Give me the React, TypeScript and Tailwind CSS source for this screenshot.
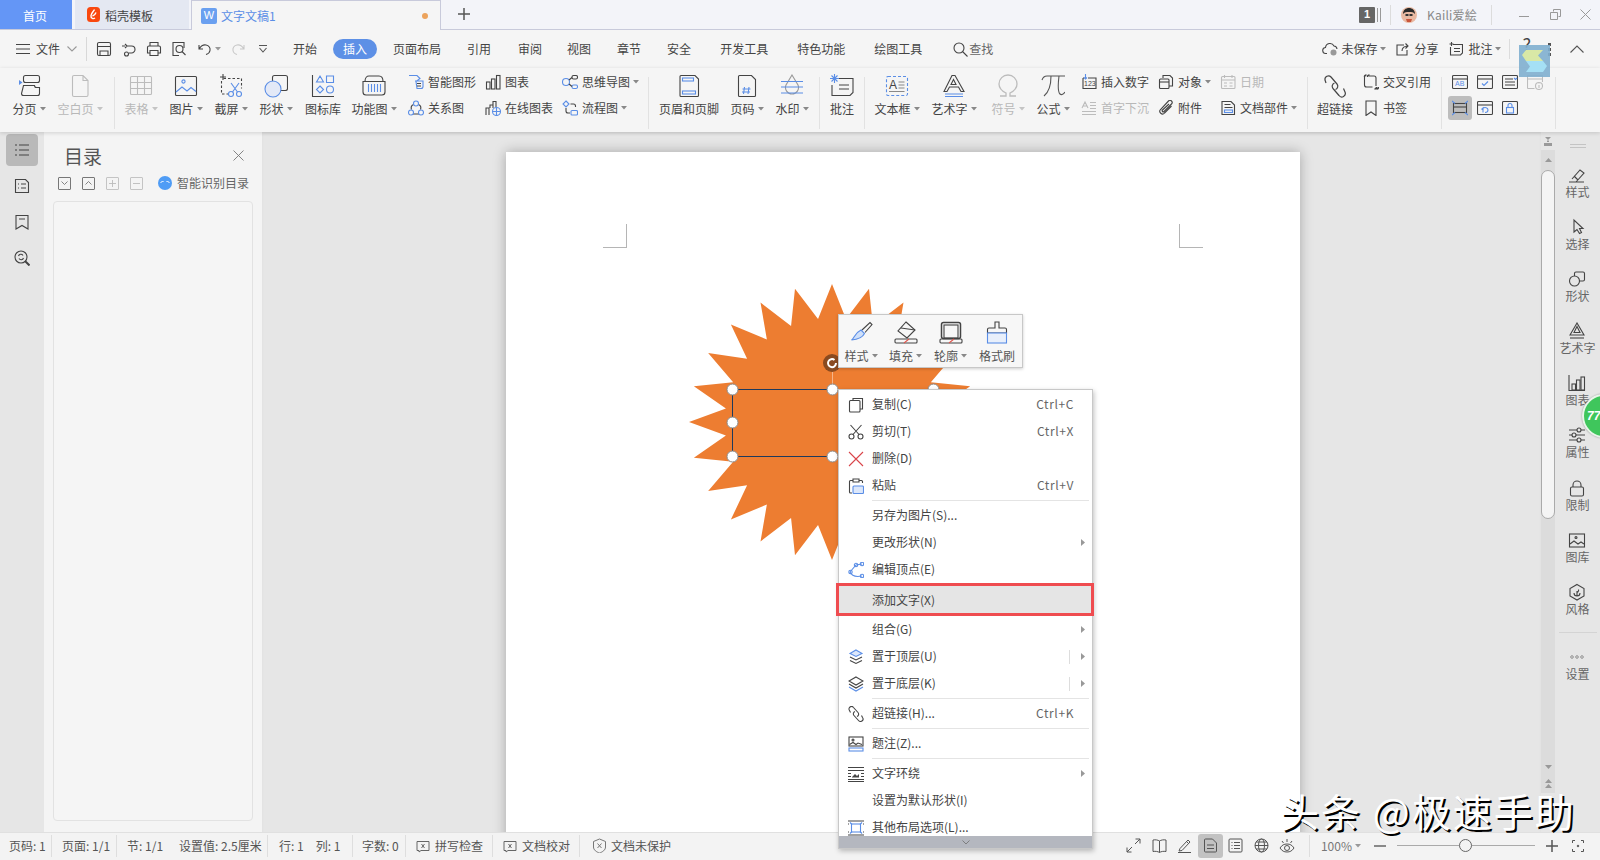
import type { ReactNode } from "react"

const B = "#5b8ee6"
const D = "#444"
const G = "#bcbcbc"

function Ico({ s = 24, h, c = D, sw = 1.1, children }: { s?: number; h?: number; c?: string; sw?: number; children: ReactNode }) {
  return (
    <svg width={s} height={h ?? s} viewBox={`0 0 ${s} ${h ?? s}`} fill="none" stroke={c} strokeWidth={sw} className="block shrink-0">
      {children}
    </svg>
  )
}

function Caret({ c = "#888" }: { c?: string }) {
  return (
    <svg width="6" height="4" viewBox="0 0 6 4" className="ml-[3px] shrink-0">
      <path d="M0 0h6L3 3.5z" fill={c} />
    </svg>
  )
}

function Big({ w, icon, label, caret, off }: { w: string; icon: ReactNode; label: string; caret?: boolean; off?: boolean }) {
  return (
    <div className={`flex flex-col items-center shrink-0 ${w}`}>
      <div className="h-[24px] flex items-center justify-center">{icon}</div>
      <div className={`mt-[2px] h-[18px] flex items-center whitespace-nowrap ${off ? "text-[#b8b8b8]" : ""}`}>
        {label}
        {caret && <Caret c={off ? "#c4c4c4" : "#888"} />}
      </div>
    </div>
  )
}

function Small({ icon, label, caret, off }: { icon: ReactNode; label: string; caret?: boolean; off?: boolean }) {
  return (
    <div className={`h-[18px] flex items-center whitespace-nowrap ${off ? "text-[#b8b8b8]" : ""}`}>
      <div className="w-[20px] shrink-0">{icon}</div>
      {label}
      {caret && <Caret />}
    </div>
  )
}

function Col({ w, children }: { w: string; children: ReactNode }) {
  return <div className={`flex flex-col gap-[8px] -mt-px shrink-0 ${w}`}>{children}</div>
}

const VDiv = () => <div className="w-px self-stretch my-[3px] bg-[#e2e2e2] shrink-0" />

function TopItem({ ml, children }: { ml: string; children: ReactNode }) {
  return <span className={`whitespace-nowrap shrink-0 ${ml}`}>{children}</span>
}

function MenuRow({ icon, label, key2, arrow, bar, hl }: { icon?: ReactNode; label: string; key2?: string; arrow?: boolean; bar?: boolean; hl?: boolean }) {
  return (
    <div className={`h-[27px] flex items-center relative ${hl ? "mt-[3px] mb-[3px] mr-px bg-[#e5e5e5] outline-3 outline-[#ef4c50]" : ""}`}>
      <div className="w-[33px] flex justify-center shrink-0">{icon}</div>
      <span className={`whitespace-nowrap ${hl ? "" : "-mt-[2px]"}`}>{label}</span>
      {key2 && <span className="ml-auto -mt-[2px] pr-[18px] tracking-[0.6px] text-[#666]">{key2}</span>}
      {bar && <div className="ml-auto w-px h-[14px] bg-[#ddd]" />}
      {arrow && (
        <svg width="4" height="7" viewBox="0 0 4 7" className={`${bar ? "ml-[11px]" : "ml-auto"} mr-[7px]`}>
          <path d="M0 0l4 3.5L0 7z" fill="#999" />
        </svg>
      )}
    </div>
  )
}

const MenuSep = () => (
  <div className="h-[3px] flex items-center pl-[33px] pr-[3px]">
    <div className="h-px w-full bg-[#e4e4e4]" />
  </div>
)

function RailItem({ icon, label }: { icon: ReactNode; label: string }) {
  return (
    <div className="h-[52.1px] flex flex-col items-center whitespace-nowrap text-[#666]">
      <div className="h-[20px] flex items-center">{icon}</div>
      <div className="h-[14px] leading-[14px]">{label}</div>
    </div>
  )
}

function StatusSeg({ w, children }: { w: string; children: ReactNode }) {
  return <div className={`flex items-center h-[22px] border-r border-[#dedede] whitespace-nowrap shrink-0 ${w}`}>{children}</div>
}

function starPoints() {
  const pts: string[] = []
  for (let i = 0; i < 48; i++) {
    const a = (i * 7.5 * Math.PI) / 180
    const rx = i % 2 === 0 ? 143 : 107
    const ry = i % 2 === 0 ? 138 : 104
    pts.push(`${146 + rx * Math.sin(a)},${140 - ry * Math.cos(a)}`)
  }
  return pts.join(" ")
}

const handles = [
  [46, 107],
  [146, 107],
  [247, 107],
  [46, 140],
  [46, 174],
  [146, 174],
]

export default function App() {
  return (
    <div className="w-[1600px] h-[860px] relative overflow-hidden flex flex-col bg-[#e6e6e6] text-[12px] text-[#444] font-['Noto_Sans_CJK_SC','Noto_Sans',sans-serif]">
      {/* tabs */}
      <div className="h-[30px] flex bg-[#f3f4f9] border-b border-[#c8cadb] shrink-0">
        <div className="w-[72px] flex items-center justify-center bg-[#6496f6] text-white pt-[2px] pr-[2px]">首页</div>
        <div className="w-[114px] ml-[3px] flex items-center bg-[#e4e8f2] pl-[12px]">
          <svg width="13" height="15" viewBox="0 0 13 15">
            <rect width="13" height="15" rx="3.5" fill="#f9480f" />
            <path d="M7.5 2.5c-1 2-3 3-3.5 6-.3 2.5 2 4 4 2.5M5.5 9c1.5-.5 3-2 3.5-3.5" fill="none" stroke="#fff" strokeWidth="1.4" />
          </svg>
          <span className="ml-[5px] mt-[2px]">稻壳模板</span>
        </div>
        <div className="w-[250px] h-[30px] ml-[2px] flex items-center bg-[#f5f5f5] border border-b-0 border-[#c8cadb] pl-[9px] pr-[12px] text-[#5b8ee6]">
          <div className="w-[16px] h-[16px] flex items-center justify-center rounded-[2px] bg-[#6aa0f0] text-white text-[11px] leading-none font-['Liberation_Sans',sans-serif]">W</div>
          <span className="ml-[4px] mt-[1px]">文字文稿1</span>
          <span className="ml-auto w-[6px] h-[6px] rounded-full bg-[#eca35c]" />
        </div>
        <div className="ml-[17px] mt-[8px]">
          <Ico s={12} c="#555" sw={1.5}><path d="M6 0v12M0 6h12" /></Ico>
        </div>
        <div className="ml-auto flex items-center text-[#888]">
          <div className="w-[16px] h-[16px] flex items-center justify-center bg-[#666] text-white rounded-[1px] font-['Liberation_Sans',sans-serif] font-bold text-[11px]">1</div>
          <div className="ml-[2px] w-[4px] h-[14px] border-x border-[#999]" />
          <div className="ml-[9px] w-px h-[20px] bg-[#dcdcdc]" />
          <svg width="16" height="16" viewBox="0 0 16 16" className="ml-[10px]">
            <circle cx="8" cy="8" r="8" fill="#e9b9a2" />
            <path d="M2 7c0-4 3-6 6-6s6 2 6 6c-2-2-3-2-6-2S4 5 2 7z" fill="#2a2a2a" />
            <rect x="4.5" y="7" width="3" height="2" fill="#333" />
            <rect x="8.5" y="7" width="3" height="2" fill="#333" />
            <path d="M5 12h6l-1 3H6z" fill="#c9563c" />
          </svg>
          <span className="ml-[10px] tracking-[0.2px]">Kaili爱絵</span>
          <div className="ml-[14px] w-px h-[20px] bg-[#dcdcdc]" />
          <div className="ml-[27px] w-[10px] h-px bg-[#999] mt-[4px]" />
          <div className="ml-[21px]">
            <Ico s={11} c="#999" sw={1}><path d="M3.5 2.5V.5h7v7h-2M.5 3.5h7v7h-7z" /></Ico>
          </div>
          <div className="ml-[19px] mr-[9px]">
            <Ico s={11} c="#999" sw={1}><path d="M.5.5l10 10M10.5.5l-10 10" /></Ico>
          </div>
        </div>
      </div>

      {/* menu row */}
      <div className="h-[38px] flex items-center bg-[#f5f5f5] shrink-0 pl-[16px] pr-[16px]">
        <Ico s={14} h={12} sw={1}><path d="M0 1.5h14M0 6h14M0 10.5h14" /></Ico>
        <TopItem ml="ml-[6px]">文件</TopItem>
        <div className="ml-[7px]"><Ico s={10} h={6} c="#999"><path d="M.5.5L5 5 9.5.5" /></Ico></div>
        <div className="ml-[9px] w-px h-[24px] bg-[#d8d8d8]" />
        <div className="ml-[9px]">
          <Ico s={16} sw={1.1}><path d="M1.5 3a1.5 1.5 0 0 1 1.5-1.5h10a1.5 1.5 0 0 1 1.5 1.5v10a1.5 1.5 0 0 1-1.5 1.5H3A1.5 1.5 0 0 1 1.5 13zM4 14.5V10h8v4.5M1.5 5.5h13" /></Ico>
        </div>
        <div className="ml-[9px]">
          <Ico s={16}><path d="M6 5h4.5a3.5 3.5 0 0 1 0 7H8M6 5L4 3M6 5L4 7M1 5h3" /><circle cx="5.5" cy="13" r="2" /></Ico>
        </div>
        <div className="ml-[9px]">
          <Ico s={16}><path d="M4 5V1.500h8V5M4 12H1.500V6.500a1.500 1.500 0 0 1 1.500-1.500h10a1.500 1.500 0 0 1 1.500 1.500V12H12M4 9.500h8v5H4z" /></Ico>
        </div>
        <div className="ml-[9px]">
          <Ico s={16}><path d="M13 7V1.500H2v13h6" /><circle cx="8.500" cy="8" r="3.500" /><path d="M11 10.500l3.500 3.500" /></Ico>
        </div>
        <div className="ml-[11px] flex items-center">
          <Ico s={14}><path d="M1 3v4h4M1.500 6.500C3 4 5 2.500 8 3c3 .5 4.500 3 4 5.500-.3 2-2 3.500-4 4" /></Ico>
          <Caret c="#999" />
        </div>
        <div className="ml-[10px]">
          <Ico s={14} c="#c8c8c8"><path d="M13 3v4H9M12.500 6.500C11 4 9 2.500 6 3c-3 .5-4.500 3-4 5.500.3 2 2 3.500 4 4" /></Ico>
        </div>
        <div className="ml-[13px]">
          <Ico s={10} h={8} c="#555"><path d="M1 .5h8M1.500 3L5 7l3.500-4" /></Ico>
        </div>
        <TopItem ml="ml-[25px]">开始</TopItem>
        <span className="ml-[16px] w-[44px] h-[20px] flex items-center justify-center rounded-full bg-[#5d90e6] text-white shrink-0">插入</span>
        <TopItem ml="ml-[16px]">页面布局</TopItem>
        <TopItem ml="ml-[26px]">引用</TopItem>
        <TopItem ml="ml-[27px]">审阅</TopItem>
        <TopItem ml="ml-[25px]">视图</TopItem>
        <TopItem ml="ml-[26px]">章节</TopItem>
        <TopItem ml="ml-[26px]">安全</TopItem>
        <TopItem ml="ml-[29px]">开发工具</TopItem>
        <TopItem ml="ml-[29px]">特色功能</TopItem>
        <TopItem ml="ml-[29px]">绘图工具</TopItem>
        <div className="ml-[31px]">
          <Ico s={15}><circle cx="6" cy="6" r="5" /><path d="M9.500 9.500l5 5" /></Ico>
        </div>
        <TopItem ml="ml-[1px] text-[#666]">查找</TopItem>
        <div className="ml-auto flex items-center">
          <Ico s={17} h={14}>
            <path d="M5 11.500H4a3 3 0 0 1-.5-6 4.500 4.500 0 0 1 8.500-1.500 3.500 3.500 0 0 1 3 3" />
            <circle cx="11.500" cy="10.500" r="3" fill="#999" stroke="none" />
          </Ico>
          <span className="ml-[2px]">未保存</span>
          <Caret />
          <div className="ml-[10px]">
            <Ico s={13}><path d="M8 2H1v10h10V7M6 8c0-3 2-5 6-5M9.500.5L12 3 9.500 5.500" /></Ico>
          </div>
          <span className="ml-[5px]">分享</span>
          <div className="ml-[11px]">
            <Ico s={14}><path d="M4 2.500h9.500v8.500l-2 2H1.500V5M5 6.500h6M5 9.500h6M2.500 0v4M.5 2h4" /></Ico>
          </div>
          <span className="ml-[5px]">批注</span>
          <Caret />
          <div className="ml-[8px] w-px h-[20px] bg-[#dcdcdc]" />
          <span className="ml-[12px] -mt-[10px] text-[18px] leading-none">?</span>
          <span className="ml-[17px] w-[3px] h-[13px] flex flex-col justify-between">
            <i className="block w-[3px] h-[3px] bg-[#555]" />
            <i className="block w-[3px] h-[3px] bg-[#555]" />
            <i className="block w-[3px] h-[3px] bg-[#555]" />
          </span>
          <div className="ml-[19px]">
            <Ico s={14} h={8} c="#555"><path d="M.5 7.500L7 1l6.500 6.500" /></Ico>
          </div>
        </div>
      </div>

      {/* ribbon */}
      <div className="h-[64px] flex items-start pt-[6px] pl-[6px] bg-[#f5f5f5] shrink-0 relative z-10 shadow-[0_1px_4px_rgba(0,0,0,0.15)]">
        <Big w="w-[46px]" caret label="分页" icon={
          <Ico><rect x="6.500" y="1.500" width="16" height="7" rx="2" /><path d="M6.500 11.500h11a2 2 0 0 0 2 2h3v6a2 2 0 0 1-2 2h-14a2 2 0 0 1-2-2z" /><path d="M2 6l3.500 2.500L2 11z" fill={B} stroke="none" /></Ico>
        } />
        <Big w="w-[56px]" caret off label="空白页" icon={
          <Ico c={G}><path d="M4.500 3a1.500 1.500 0 0 1 1.500-1.500h9l5 5V21a1.500 1.500 0 0 1-1.500 1.500H6A1.500 1.500 0 0 1 4.500 21zM15 1.500v5h5" /></Ico>
        } />
        <div className="w-[6px] shrink-0" />
        <VDiv />
        <Big w="w-[52px]" caret off label="表格" icon={
          <Ico c={G}><rect x="1.500" y="2.500" width="21" height="18" rx="1" /><path d="M1.500 8.500h21M1.500 14.500h21M8.500 2.500v18M15.500 2.500v18" /></Ico>
        } />
        <Big w="w-[38px]" caret label="图片" icon={
          <Ico><rect x="1.500" y="2.500" width="21" height="19" rx="1" /><circle cx="9.500" cy="7.500" r="1.600" stroke={B} /><path d="M2 18l6-5 5 4 4-3.500 5 4" stroke={B} /></Ico>
        } />
        <Big w="w-[52px]" caret label="截屏" icon={
          <Ico><path d="M4.500 4.500h18v10M2.500 7v13h9" strokeDasharray="2.500 2" /><path d="M4 0v6M1 3h6" /><circle cx="12" cy="20" r="2.500" stroke={B} /><circle cx="20" cy="20" r="2.500" stroke={B} /><path d="M13.500 18L20 9M18.500 18L12 9" stroke={B} /></Ico>
        } />
        <Big w="w-[38px]" caret label="形状" icon={
          <Ico><rect x="8.500" y="1.500" width="15" height="15" rx="2" /><circle cx="9" cy="15" r="8" fill="#e3e9f7" stroke={B} /></Ico>
        } />
        <Big w="w-[56px]" label="图标库" icon={
          <Ico><path d="M1.500 1v21.500H23" /><path d="M9 2l3.500 6h-7zM15.500 2h7v6.500h-7zM9 12l3.500 3.500L9 19l-3.500-3.500z" stroke={B} /><circle cx="19" cy="15.500" r="3.500" stroke={B} /></Ico>
        } />
        <Big w="w-[46px]" caret label="功能图" icon={
          <Ico><path d="M3 7.500c0-4 2-5.500 4-5.500h10c2 0 4 1.500 4 5.500M1 7.500h22V18a3 3 0 0 1-3 3H4a3 3 0 0 1-3-3z" /><path d="M6.500 10v8M9.500 10v8M12.500 10v8M15.500 10v8M18.500 10v8" stroke={B} /></Ico>
        } />
        <div className="w-[11px] shrink-0" />
        <Col w="w-[77px]">
          <Small label="智能图形" icon={<Ico s={16}><path d="M1 1.500h8l3 3-4 3 1 7h4a2 2 0 0 0 2-2V7H7" stroke={B} /><path d="M9 9.500h4M9 12h4" /></Ico>} />
          <Small label="关系图" icon={<Ico s={16}><path d="M5.500 4.500a4 4 0 0 0-2 5M10.500 4.500a4 4 0 0 1 2 5M5 14h6" /><circle cx="8" cy="3.500" r="2.500" stroke={B} /><circle cx="3" cy="12.500" r="2.500" stroke={B} /><circle cx="13" cy="12.500" r="2.500" stroke={B} /></Ico>} />
        </Col>
        <Col w="w-[77px]">
          <Small label="图表" icon={<Ico s={16}><rect x="1.500" y="8" width="3.500" height="7" /><rect x="6.500" y="5" width="3.500" height="10" /><rect x="11.500" y="1.500" width="3.500" height="13.500" /></Ico>} />
          <Small label="在线图表" icon={<Ico s={16}><path d="M1 15V8h3v7M5 8V5h3v3M8 5V1.500h3V7" /><circle cx="11.500" cy="11.500" r="4" stroke={B} /><path d="M7.500 11.500h8M11.500 7.500v8" stroke={B} /></Ico>} />
        </Col>
        <Col w="w-[86px]">
          <Small caret label="思维导图" icon={<Ico s={16}><circle cx="4" cy="8" r="3.500" stroke={B} /><rect x="10" y="1.500" width="5.500" height="3.500" rx="1.500" /><rect x="10" y="11" width="5.500" height="3.500" rx="1.500" stroke={B} /><path d="M7 6l3-2.500M7 10l3 2.500" /></Ico>} />
          <Small caret label="流程图" icon={<Ico s={16}><path d="M4 1l3 3-3 3-3-3z" stroke={B} /><path d="M8.500 4h3a2 2 0 0 1 2 2v1M4 8v3a2 2 0 0 0 2 2h2" /><rect x="9" y="10.500" width="6.500" height="4.500" rx="1" stroke={B} /></Ico>} />
        </Col>
        <VDiv />
        <Big w="w-[80px]" label="页眉和页脚" icon={
          <Ico><path d="M3 2.500a1 1 0 0 1 1-1h14l3.500 3.500v16.500a1 1 0 0 1-1 1H4a1 1 0 0 1-1-1z" /><rect x="5.500" y="4" width="11" height="3" stroke={B} /><rect x="5.500" y="17" width="13" height="3" stroke={B} /></Ico>
        } />
        <Big w="w-[36px]" caret label="页码" icon={
          <Ico><path d="M3.500 2.500a1 1 0 0 1 1-1h12l4 4v16a1 1 0 0 1-1 1h-15a1 1 0 0 1-1-1z" /><path d="M9.500 13l-1 7M14 13l-1 7M7.500 15h8M7 18h8" stroke={B} /></Ico>
        } />
        <Big w="w-[54px]" caret label="水印" icon={
          <Ico c="#999"><path d="M12 1l6 10a6.500 6.500 0 1 1-12 0z" /><path d="M1 7.500h22M1 13h22M1 19h22" stroke={B} /></Ico>
        } />
        <VDiv />
        <Big w="w-[44px]" label="批注" icon={
          <Ico><path d="M9 4.500h14v14l-3 3H2V11M9 11h10M9 15h10" /><path d="M4.500 0v9M0 4.500h9M1.500 1.500l6 6M7.500 1.500l-6 6" stroke={B} /></Ico>
        } />
        <VDiv />
        <Big w="w-[64px]" caret label="文本框" icon={
          <Ico>
            <rect x="1.500" y="2.500" width="21" height="19" rx="1.500" stroke={B} strokeDasharray="3 2" />
            <text x="4" y="15" fontSize="12" fill={D} stroke="none" fontFamily="Liberation Sans">A</text>
            <path d="M13.500 8h6M13.500 11h6M13.500 14h6M4 17.500h15.500" stroke="#888" />
          </Ico>
        } />
        <Big w="w-[50px]" caret label="艺术字" icon={
          <Ico><path d="M2 17.500L10 1.500h3l9 16h-3l-2.500-4.500h-9L5 17.500z" /><path d="M9 10.500l2.500-5 2.500 5z" /><path d="M3 20h18M3 22.500h18" stroke={B} /></Ico>
        } />
        <Big w="w-[58px]" caret off label="符号" icon={
          <Ico c={G} sw={1.3}><path d="M4 22h6v-3C6 17 3 14 3 10a9 9 0 0 1 18 0c0 4-3 7-7 9v3h6" /></Ico>
        } />
        <Big w="w-[32px]" caret label="公式" icon={
          <Ico c="#555"><path d="M1 6c1-3 3-4 5-4h18M10 2c0 9-2 16-7 20M18 2c-1 8-1 16 1 18 1 1 3 1 5-2" /></Ico>
        } />
        <div className="w-[12px] shrink-0" />
        <Col w="w-[77px]">
          <Small label="插入数字" icon={
            <Ico s={16}>
              <path d="M2 4v10.500h13V4H7M2 4h1" />
              <path d="M4.500 0v5M3 3.500l1.500 1.500L6 3.500" stroke={B} />
              <text x="3" y="12" fontSize="7" fill={D} stroke="none" fontFamily="Liberation Sans">123</text>
            </Ico>
          } />
          <Small off label="首字下沉" icon={<Ico s={16} c={G}><path d="M1 8l3-6 3 6M2 6h4M9 2.500h6M9 5.500h6M9 8.500h6M1 11.500h14M1 14.500h14" /></Ico>} />
        </Col>
        <Col w="w-[62px]">
          <Small caret label="对象" icon={<Ico s={16}><path d="M5 4V1.500h7l2.500 2.500v8H11" /><rect x="1.500" y="5" width="9.500" height="9.500" rx="1" /><path d="M1.500 8h9.500" /></Ico>} />
          <Small label="附件" icon={<Ico s={16}><path d="M13.500 6l-7 7a2.500 2.500 0 0 1-4-3.500l8-8.500a2 2 0 0 1 3 3l-7.500 7.500a1 1 0 0 1-1.500-1.500L11 4" /></Ico>} />
        </Col>
        <Col w="w-[87px]">
          <Small off label="日期" icon={<Ico s={16} c={G}><rect x="1.500" y="2.500" width="13.500" height="12" rx="1" /><path d="M1.500 6h13.500M4.500 1v3M12 1v3M4 9h3M9.500 9h3M4 12h3M9.500 12h3" /></Ico>} />
          <Small caret label="文档部件" icon={<Ico s={16}><path d="M2 1.500h9l3.500 3.500v9.500H2z" /><path d="M4.500 4.500h6M4.500 7.500h8" /><rect x="4.500" y="10" width="8" height="2.500" stroke={B} /></Ico>} />
        </Col>
        <VDiv />
        <Big w="w-[54px]" label="超链接" icon={
          <Ico sw={1.2}><path d="M3 9l-1-3a3.500 3.500 0 0 1 6-3l6 7a3.500 3.500 0 0 1-1.500 5.500" /><path d="M20.500 14.500l1.500 3.500a3.500 3.500 0 0 1-6 3.500l-6-7a3.500 3.500 0 0 1 1.500-5.500" /></Ico>
        } />
        <div className="w-px shrink-0" />
        <Col w="w-[78px]">
          <Small label="交叉引用" icon={
            <Ico s={16}><path d="M1.500 3v8a2 2 0 0 0 2 2h6M13 12V4a2 2 0 0 0-2-2H6" /><path d="M1.500 3c0-1.500 1-2 2-2M4.500 3c0-1.500 1-2 2-2M13.500 13c0 1.500-1 2-2 2M15.500 13c0 1.500-1 2-2 2" strokeWidth="1.500" /></Ico>
          } />
          <Small label="书签" icon={<div className="ml-[2px]"><Ico s={12} h={16}><path d="M1 1h10v14.500l-5-3.500-5 3.500z" /></Ico></div>} />
        </Col>
        <VDiv />
        <div className="w-[10px] shrink-0" />
        <div className="flex flex-col gap-[8px] -mt-px w-[100px] shrink-0">
          <div className="h-[18px] flex items-center">
            <div className="w-[25px]">
              <Ico s={16}><rect x=".5" y="1.500" width="15" height="13" rx="1" /><path d="M.5 5h15" /><text x="3" y="12" fontSize="7" fill={B} stroke="none" fontFamily="Liberation Sans">AB</text></Ico>
            </div>
            <div className="w-[25px]">
              <Ico s={16}><rect x=".5" y="1.500" width="15" height="13" rx="1" /><path d="M.5 5h15" /><path d="M5 9.500l2 2 4-4" stroke={B} /></Ico>
            </div>
            <div className="w-[25px]">
              <Ico s={16}><rect x=".5" y="1.500" width="15" height="13" rx="1" /><path d="M3 5h8M3 8h10M3 11h10" /><path d="M12 4l1.500 1.500L15 4" stroke={B} /></Ico>
            </div>
            <div className="w-[25px]">
              <Ico s={16} c={G}><path d="M.5 14.500v-13h15V8M.5 5h15M.5 14.500h7" /><circle cx="12" cy="12" r="3.500" /><path d="M12 11v3M12 9.500v.5" /></Ico>
            </div>
          </div>
          <div className="h-[18px] flex items-center">
            <div className="w-[25px]">
              <div className="-ml-[4px] w-[24px] h-[24px] flex items-center justify-center rounded-[3px] bg-[#bdbdbd]">
                <Ico s={16}><rect x="1.500" y="3.500" width="13" height="9" /><path d="M1.500 7h13" /><path d="M0 1l3 2.500M16 1l-3 2.500M0 15l3-2.500M16 15l-3-2.500" stroke={B} /></Ico>
              </div>
            </div>
            <div className="w-[25px]">
              <Ico s={16}><rect x=".5" y="1.500" width="15" height="13" rx="1" /><path d="M.5 5h15" /><path d="M6 12.500V8l-1.500 1.500M6 8c2-1 5-.5 5 2s-2 2.500-3 2.500" stroke={B} /></Ico>
            </div>
            <div className="w-[25px]">
              <Ico s={16}><rect x=".5" y="1.500" width="15" height="13" rx="1" /><rect x="4.500" y="7.500" width="7" height="5.500" stroke={B} /><path d="M6 7.500V5.500a2 2 0 0 1 4 0v2" stroke={B} /></Ico>
            </div>
          </div>
        </div>
        <div className="w-[3px] shrink-0" />
        <VDiv />
      </div>

      {/* main */}
      <div className="flex-1 flex min-h-0">
        <div className="w-[44px] shrink-0 flex flex-col items-center pt-[2px] gap-[4px]">
          <div className="w-[32px] h-[32px] flex items-center justify-center rounded-[4px] bg-[#b9b9b9]">
            <Ico s={16}><path d="M5 3h10M5 8h10M5 13h10M1 3h2M1 8h2M1 13h2" /></Ico>
          </div>
          <div className="w-[32px] h-[32px] flex items-center justify-center">
            <Ico s={16}><path d="M1.500 1.500h10l3 3v10h-13z" /><path d="M4 6h1M7 6h5M4 10h1M7 10h5" /></Ico>
          </div>
          <div className="w-[32px] h-[32px] flex items-center justify-center">
            <Ico s={16}><path d="M2 1.500h12V15l-6-3.500L2 15zM5 5h6" /></Ico>
          </div>
          <div className="w-[32px] h-[32px] flex items-center justify-center">
            <Ico s={16}><circle cx="7" cy="7" r="6" /><path d="M11 11l4.500 4.500" strokeWidth="2" /><path d="M4.500 6a2.500 2.500 0 0 1 4.500-.5M9.500 8a2.500 2.500 0 0 1-4.500.5" /></Ico>
          </div>
        </div>

        <div className="w-[218px] shrink-0 bg-[#f4f4f4] flex flex-col">
          <div className="h-[24px] mt-[11px] flex items-center justify-between pl-[20px] pr-[18px]">
            <span className="text-[19px] text-[#555] leading-none">目录</span>
            <Ico s={11} c="#777" sw={.9}><path d="M.5.5l10 10M10.500.5l-10 10" /></Ico>
          </div>
          <div className="mt-[9px] h-[14px] flex items-center pl-[14px]">
            <div className="w-[13px] h-[13px] flex items-center justify-center border border-[#777] rounded-[1px]">
              <Ico s={7} h={4} c="#777" sw={.9}><path d="M.5.5L3.500 3.500 6.500.5" /></Ico>
            </div>
            <div className="ml-[11px] w-[13px] h-[13px] flex items-center justify-center border border-[#777] rounded-[1px]">
              <Ico s={7} h={4} c="#777" sw={.9}><path d="M.5 3.500L3.500.5 6.500 3.500" /></Ico>
            </div>
            <div className="ml-[11px] w-[13px] h-[13px] flex items-center justify-center border border-[#c4c4c4] rounded-[1px]">
              <Ico s={7} c="#bbb" sw={.9}><path d="M3.500 0v7M0 3.500h7" /></Ico>
            </div>
            <div className="ml-[11px] w-[13px] h-[13px] flex items-center justify-center border border-[#c4c4c4] rounded-[1px]">
              <Ico s={7} c="#bbb" sw={.9}><path d="M0 3.500h7" /></Ico>
            </div>
            <svg width="14" height="14" viewBox="0 0 14 14" className="ml-[15px]">
              <circle cx="7" cy="7" r="7" fill="#4f9cf5" />
              <path d="M2.500 7l2-2 1 1M8.500 6l1-1 2 2" fill="none" stroke="#fff" strokeWidth="1" />
            </svg>
            <span className="ml-[5px] whitespace-nowrap text-[#666]">智能识别目录</span>
          </div>
          <div className="mx-[9px] mt-[11px] h-[620px] bg-[#f5f5f5] border border-[#e2e2e2] rounded-[4px]" />
        </div>

        <div className="flex-1 min-w-0 pl-[244px] pt-[20px] overflow-hidden shadow-[inset_0_2px_3px_rgba(0,0,0,0.04)]">
          <div className="w-[794px] h-[900px] bg-white relative shadow-[0_0_12px_rgba(0,0,0,0.28)]">
            <div className="absolute left-[97px] top-[72px] w-[24px] h-[24px] border-r border-b border-[#b5b5b5]" />
            <div className="absolute left-[673px] top-[72px] w-[24px] h-[24px] border-l border-b border-[#b5b5b5]" />
            <svg width="310" height="285" viewBox="0 0 310 285" className="absolute left-[180px] top-[130px]">
              <polygon points={starPoints()} fill="#ed7d31" />
              <path d="M146.500 107V90" stroke="#f5b58a" strokeWidth="1" />
              <rect x="46.500" y="107.500" width="201" height="67" fill="none" stroke="#1f3a5c" strokeWidth="1" />
              <circle cx="146" cy="81" r="9" fill="#8a4a20" />
              <path d="M150 81a4 4 0 1 1-1.500-3" fill="none" stroke="#fff" strokeWidth="2" />
              {handles.map(([x, y]) => (
                <circle key={`${x}-${y}`} cx={x + 0.5} cy={y + 0.5} r="5.500" fill="#fff" stroke="#8a8a8a" strokeWidth="1" />
              ))}
            </svg>
          </div>
        </div>

        {/* scrollbar */}
        <div className="w-[14px] shrink-0 flex flex-col">
          <div className="h-[18px] flex items-center justify-center">
            <svg width="8" height="9" viewBox="0 0 8 9"><path d="M1 0h6L4 3zM3 3.500h2V5H3zM0 6h8v3H0z" fill="#999" /></svg>
          </div>
          <div className="h-[643px] bg-[#dcdcdc] flex flex-col">
            <div className="h-[20px] flex items-center justify-center">
              <svg width="7" height="4" viewBox="0 0 7 4"><path d="M3.500 0L7 4H0z" fill="#999" /></svg>
            </div>
            <div className="h-[349px] bg-[#f4f4f4] border border-[#aaa] rounded-full" />
            <div className="mt-auto mb-[5px] flex flex-col items-center gap-[10px]">
              <svg width="7" height="4" viewBox="0 0 7 4"><path d="M0 0h7L3.500 4z" fill="#999" /></svg>
              <svg width="7" height="9" viewBox="0 0 7 9"><path d="M3.500 0L7 4H0zM3.500 5L7 9H0z" fill="#999" /></svg>
            </div>
          </div>
        </div>

        {/* right rail */}
        <div className="w-[45px] shrink-0 flex flex-col items-center pt-[12px]">
          <div className="w-[16px] h-[4px] border-y border-[#c4c4c4] mb-[17px]" />
          <RailItem label="样式" icon={<Ico s={18}><path d="M1 16h15M4 13l8-9 4 3-8 9M6 10l4 4" /></Ico>} />
          <RailItem label="选择" icon={<Ico s={18}><path d="M6 2v12l3-2.500 2.500 4 2-1-2-4h3.500z" /></Ico>} />
          <RailItem label="形状" icon={<Ico s={18}><rect x="6.500" y="2" width="10" height="9" rx="1.500" /><circle cx="6.500" cy="11" r="5" fill="#e6e6e6" /></Ico>} />
          <RailItem label="艺术字" icon={<Ico s={18}><path d="M2 13L9 1l7 12zM6 10.500l3-6 3 6z" /><path d="M2 16h14" /></Ico>} />
          <RailItem label="图表" icon={<Ico s={18}><path d="M1 1v15.500h16" /><rect x="4" y="10" width="3.500" height="6" /><rect x="8.500" y="6" width="3.500" height="10" /><rect x="13" y="3" width="3.500" height="13" /></Ico>} />
          <RailItem label="属性" icon={<Ico s={18}><path d="M1 4h16M1 9h16M1 14h16" /><circle cx="11" cy="4" r="2" fill="#e6e6e6" /><circle cx="6" cy="9" r="2" fill="#e6e6e6" /><circle cx="11" cy="14" r="2" fill="#e6e6e6" /></Ico>} />
          <RailItem label="限制" icon={<Ico s={18}><rect x="2.500" y="8" width="13" height="9" rx="1.500" /><path d="M5 8V6a4 4 0 0 1 8 0v2" /></Ico>} />
          <RailItem label="图库" icon={<Ico s={18}><rect x="1.500" y="3" width="15" height="13" /><circle cx="8" cy="6.500" r="1" /><path d="M2 13l4-3 4 3 3-2 3 2" /></Ico>} />
          <RailItem label="风格" icon={<Ico s={18}><path d="M9 1.500l7 4v7.500l-7 4-7-4V5.500z" /><path d="M9 13V8M9 13c-2 0-3-1.500-3-3M9 13c2 0 3-1.500 3-3M9 9.500c1-.5 2-2 1.500-3" /></Ico>} />
          <div className="w-[38px] h-px bg-[#d4d4d4] -mt-[2px] mb-[14px]" />
          <RailItem label="设置" icon={<Ico s={18} c="#888" sw={.9}><circle cx="4" cy="9" r="1.300" /><circle cx="9" cy="9" r="1.300" /><circle cx="14" cy="9" r="1.300" /></Ico>} />
        </div>
      </div>

      {/* status bar */}
      <div className="h-[28px] shrink-0 flex items-center justify-between bg-[#f3f3f3] border-t border-[#e0e0e0] text-[#555] relative pb-[2px]">
        <div className="flex items-center">
          <StatusSeg w="w-[52px] pl-[9px]">页码: 1</StatusSeg>
          <StatusSeg w="w-[65px] pl-[10px]">页面: 1/1</StatusSeg>
          <StatusSeg w="w-[151px] pl-[10px]">
            <span>节: 1/1</span>
            <span className="ml-[16px]">设置值: 2.5厘米</span>
          </StatusSeg>
          <StatusSeg w="w-[85px] pl-[11px]">
            <span>行: 1</span>
            <span className="ml-[12px]">列: 1</span>
          </StatusSeg>
          <StatusSeg w="w-[53px] pl-[9px]">字数: 0</StatusSeg>
          <StatusSeg w="w-[87px] pl-[10px]">
            <Ico s={14} c="#666" sw={1}><path d="M1 2.500h12v9H5l-2 1.500v-1.500H1zM5.500 5l3 4M8.500 5l-3 4" /></Ico>
            <span className="ml-[5px]">拼写检查</span>
          </StatusSeg>
          <StatusSeg w="w-[87px] pl-[10px]">
            <Ico s={14} c="#666" sw={1}><path d="M1 2.500h12v9H5l-2 1.500v-1.500H1zM5.500 5l3 4M8.500 5l-3 4" /></Ico>
            <span className="ml-[5px]">文档校对</span>
          </StatusSeg>
          <div className="pl-[12px] flex items-center whitespace-nowrap">
            <Ico s={15} c="#777" sw={1}><path d="M7.500 1l6 2.500V9c0 3-3 5-6 6-3-1-6-3-6-6V3.500zM5.500 5.500l4 4.500M9.500 5.500l-4 4.500" /></Ico>
            <span className="ml-[4px]">文档未保护</span>
          </div>
        </div>
        <div className="flex items-center pr-[16px]">
          <div className="w-[25.600px] flex justify-center">
            <Ico s={15} c="#555" sw={1}><path d="M9.500 1H14v4.500M5.500 14H1V9.500M14 1L9 6M1 14l5-5" /></Ico>
          </div>
          <div className="w-[25.600px] flex justify-center">
            <Ico s={15} c="#555" sw={1}><path d="M7.500 3c-1.500-1-4-1.500-6.500-1v11.500c2.500-.5 5 0 6.500 1 1.500-1 4-1.500 6.500-1V2c-2.500-.5-5 0-6.500 1zM7.500 3v11.500" /></Ico>
          </div>
          <div className="w-[25.600px] flex justify-center">
            <Ico s={15} c="#555" sw={1}><path d="M1 14.500h13M3 10.500l8-8.500 2 2-8 8.500-3 .5zM9.500 3.500l2 2" /></Ico>
          </div>
          <div className="w-[25.600px] h-[24px] flex items-center justify-center rounded-[3px] bg-[#c2c2c2]">
            <Ico s={15} c="#555" sw={1}><path d="M1.500 2a1 1 0 0 1 1-1h7l4 4v8a1 1 0 0 1-1 1h-10a1 1 0 0 1-1-1zM4 7h7M4 10.500h7" /></Ico>
          </div>
          <div className="w-[25.600px] flex justify-center">
            <Ico s={15} c="#555" sw={1}><rect x="1" y="1" width="13" height="13" rx="1" /><path d="M3.500 4.500h1M6 4.500h6M3.500 7.500h1M6 7.500h6M3.500 10.500h1M6 10.500h6" /></Ico>
          </div>
          <div className="w-[25.600px] flex justify-center">
            <Ico s={15} c="#555" sw={1}><circle cx="7.500" cy="7.500" r="6.500" /><ellipse cx="7.500" cy="7.500" rx="3" ry="6.500" /><path d="M1 7.500h13M2 4h11M2 11h11" /></Ico>
          </div>
          <div className="w-[25.600px] flex justify-center">
            <Ico s={16} c="#555" sw={1}><path d="M1 10c2-3 4-4 7-4s5 1 7 4c-2 3-4 4-7 4s-5-1-7-4z" /><circle cx="8" cy="10" r="2.500" /><path d="M3 3l1.500 2M8 1v3M13 3l-1.500 2" /></Ico>
          </div>
          <div className="ml-[9px] w-px h-[22px] bg-[#dedede]" />
          <span className="ml-[11px] text-[#777] whitespace-nowrap">100%</span>
          <Caret c="#999" />
          <div className="ml-[13px]"><Ico s={12} c="#666" sw={1.500}><path d="M0 6h12" /></Ico></div>
          <div className="ml-[11px] w-[138px] h-px bg-[#aaa] relative">
            <div className="absolute left-[62px] -top-[6px] w-[13px] h-[13px] rounded-full bg-[#f3f3f3] border border-[#666]" />
          </div>
          <div className="ml-[11px]"><Ico s={12} c="#555" sw={1.500}><path d="M6 0v12M0 6h12" /></Ico></div>
          <div className="ml-[14px]">
            <Ico s={12} c="#555" sw={1}><path d="M.5 3V.5H3M9 .5h2.500V3M.5 9v2.500H3M9 11.500h2.500V9" /><circle cx="6" cy="6" r=".8" fill="#555" /></Ico>
          </div>
        </div>
      </div>

      {/* logo sticker over the title area */}
      <svg width="31" height="32" viewBox="0 0 31 32" className="absolute left-[1519px] top-[45px] z-20">
        <rect width="31" height="32" fill="#7fafcf" opacity=".9" />
        <path d="M24 5H7L3 10l4 6h17l-5-5.500z" fill="#d9e8a6" />
        <path d="M7 16h17l4 5-4 6H7l4-5.500z" fill="#a5e0f5" />
      </svg>

      {/* green float ball */}
      <div className="absolute left-[1582px] top-[394px] z-20 w-[44px] h-[44px] rounded-full bg-[#3fc65c] border-2 border-[#e9f4ea] shadow-[0_0_2px_rgba(0,0,0,0.4)] flex items-center pl-[3px]">
        <span className="text-white text-[12px] font-bold italic font-['Liberation_Sans',sans-serif]">77</span>
      </div>

      {/* watermark */}
      <div className="absolute left-[1280px] top-[786px] z-30 text-[39px] leading-[48px] tracking-[2px] whitespace-nowrap text-white [text-shadow:2px_2px_0_#000]">
        头条 @极速手助
      </div>

      {/* mini toolbar */}
      <div className="absolute left-[838px] top-[314px] z-20 w-[185px] h-[54px] flex bg-[#f7f7f7] border border-[#c8c8c8] shadow-[0_1px_3px_rgba(0,0,0,0.2)] pt-[6px] text-[#555]">
        <Big w="w-[44px]" caret label="样式" icon={
          <Ico><path d="M13 9l8-7.500 2 2-7 8" /><path d="M12 9l3.500 3.500c-2 4-7 6-13 6.500 3-2 3-7 9.500-10z" fill="#cfe0fa" stroke={B} /></Ico>
        } />
        <Big w="w-[45px]" caret label="填充" icon={
          <Ico><path d="M12 1l9 8-8 8-9-7z" /><path d="M7 7l14 2" /><rect x="1" y="18" width="22" height="4" rx="1" /><path d="M10 22l5-4" stroke="#e0564d" /></Ico>
        } />
        <Big w="w-[45px]" caret label="轮廓" icon={
          <Ico><rect x="2.500" y="1.500" width="19" height="16" rx="2" strokeWidth="1.500" /><rect x="5" y="4" width="14" height="13" /><rect x="1" y="18" width="22" height="4" rx="1" /><path d="M10 22l5-4" stroke="#e0564d" /></Ico>
        } />
        <Big w="w-[48px]" label="格式刷" icon={
          <Ico><path d="M10 1h4v6h6a1.500 1.500 0 0 1 1.500 1.500V12h-19V8.500A1.500 1.500 0 0 1 4 7h6z" stroke={D} /><rect x="2.500" y="12" width="19" height="10" fill="#e8effb" stroke={B} /></Ico>
        } />
      </div>

      {/* context menu */}
      <div className="absolute left-[838px] top-[389px] z-20 w-[255px] h-[460px] bg-white border border-[#c8c8c8] shadow-[1px_2px_5px_rgba(0,0,0,0.25)] pt-[1px]">
        <MenuRow label="复制(C)" key2="Ctrl+C" icon={<Ico s={16}><path d="M5 3.500V1.500h9.500v10.500H12" /><rect x="1.500" y="3.500" width="10.500" height="11.500" rx="1" /></Ico>} />
        <MenuRow label="剪切(T)" key2="Ctrl+X" icon={<Ico s={16}><circle cx="3.500" cy="12.500" r="2.500" /><circle cx="12.500" cy="12.500" r="2.500" /><path d="M5 10.500L13.500 1M11 10.500L2.500 1" /></Ico>} />
        <MenuRow label="删除(D)" icon={<Ico s={16} c="#d9444a"><path d="M1 1l14 14M15 1L1 15" /></Ico>} />
        <MenuRow label="粘贴" key2="Ctrl+V" icon={<Ico s={16}><path d="M5 2.500H2.500a1 1 0 0 0-1 1V14a1 1 0 0 0 1 1H4M11 2.500h2.500a1 1 0 0 1 1 1V5M5 1h6v3H5z" /><rect x="5" y="8" width="10.500" height="7.500" rx="1" fill="#dce7fa" stroke={B} /></Ico>} />
        <MenuSep />
        <MenuRow label="另存为图片(S)..." />
        <MenuRow label="更改形状(N)" arrow />
        <MenuRow label="编辑顶点(E)" icon={<Ico s={16} c={B}><path d="M2 10l6-7 6-1M2 10c2 5 7 5 12 4" /><circle cx="2.500" cy="10" r="1.700" /><circle cx="8" cy="3" r="1.700" /><circle cx="14" cy="2" r="1.700" /><circle cx="14" cy="14" r="1.700" /></Ico>} />
        <MenuRow hl label="添加文字(X)" />
        <MenuRow label="组合(G)" arrow />
        <MenuRow label="置于顶层(U)" arrow bar icon={<Ico s={16}><path d="M2 8l6 3 6-3M2 11.500l6 3 6-3" /><path d="M8 1l6 3.500L8 7.500 2 4.500z" fill="#dce7fa" stroke={B} /></Ico>} />
        <MenuRow label="置于底层(K)" arrow bar icon={<Ico s={16}><path d="M8 1l7 4-7 4-7-4zM1 8l7 4 7-4" /><path d="M1 11l7 4 7-4" stroke={B} /></Ico>} />
        <MenuSep />
        <MenuRow label="超链接(H)..." key2="Ctrl+K" icon={<Ico s={16}><path d="M2.500 6.500L1.500 4.500a2.500 2.500 0 0 1 4-3l4.500 5a2.500 2.500 0 0 1-1 4" /><path d="M13.500 9.500l1 2a2.500 2.500 0 0 1-4 3L6 9.500a2.500 2.500 0 0 1 1-4" /></Ico>} />
        <MenuSep />
        <MenuRow label="题注(Z)..." icon={<Ico s={16}><rect x="1" y="1" width="14" height="9" /><circle cx="5" cy="4" r="1" /><path d="M1.500 8.500l3.500-2 3 2 2-1.500 4 1.500" /><rect x="1" y="12" width="14" height="3" stroke={B} /></Ico>} />
        <MenuSep />
        <MenuRow label="文字环绕" arrow icon={<Ico s={16}><path d="M0 1.500h16M0 4.500h16M0 13.500h16M0 15.500h16M0 7.500h3M0 10.500h3M13 7.500h3M13 10.500h3" /><path d="M4 11l3-3 2 2 2-2v3.500H4z" fill="#444" stroke="none" /></Ico>} />
        <MenuRow label="设置为默认形状(I)" />
        <MenuRow label="其他布局选项(L)..." icon={<Ico s={16}><path d="M0 1h16M0 15h16M0 4h1M15 4h1M0 12h1M15 12h1" /><rect x="3.500" y="4" width="9" height="8" stroke={B} /><path d="M2 2.500l2 2M14 2.500l-2 2M2 13.500l2-2M14 13.500l-2-2" stroke={B} /></Ico>} />
        <div className="absolute left-0 right-0 bottom-0 h-[12px] bg-[#b4b7bf] flex items-center justify-center">
          <Ico s={8} h={5} c="#777" sw={.9}><path d="M.5.5L4 4 7.500.5" /></Ico>
        </div>
      </div>
    </div>
  )
}
